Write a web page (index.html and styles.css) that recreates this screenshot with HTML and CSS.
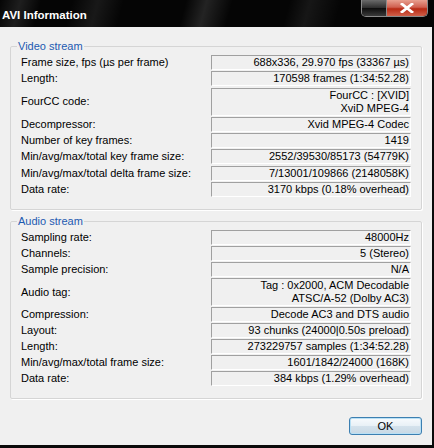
FILE: index.html
```html
<!DOCTYPE html>
<html>
<head>
<meta charset="utf-8">
<link rel="stylesheet" href="styles.css">
</head>
<body>
<div class="window">
  <div class="titlebar">
    <span class="title">AVI Information</span>
    <div class="caption-btns">
      <span class="btn-min"></span>
      <span class="btn-close">
        <svg width="14" height="10" viewBox="0 0 14 10"><path d="M2 1 L12 9 M12 1 L2 9" stroke="#fff" stroke-width="2.8" stroke-linecap="square" fill="none"/></svg>
      </span>
    </div>
  </div>
  <div class="client">
    <fieldset class="group video">
      <legend>Video stream</legend>
      <div class="rows">
        <div class="label">Frame size, fps (µs per frame)</div><div class="value">688x336, 29.970 fps (33367 µs)</div>
        <div class="label">Length:</div><div class="value">170598 frames (1:34:52.28)</div>
        <div class="label">FourCC code:</div><div class="value">FourCC : [XVID]<br>XviD MPEG-4</div>
        <div class="label">Decompressor:</div><div class="value">Xvid MPEG-4 Codec</div>
        <div class="label">Number of key frames:</div><div class="value">1419</div>
        <div class="label">Min/avg/max/total key frame size:</div><div class="value">2552/39530/85173 (54779K)</div>
        <div class="label">Min/avg/max/total delta frame size:</div><div class="value">7/13001/109866 (2148058K)</div>
        <div class="label">Data rate:</div><div class="value">3170 kbps (0.18% overhead)</div>
      </div>
    </fieldset>
    <fieldset class="group audio">
      <legend>Audio stream</legend>
      <div class="rows">
        <div class="label">Sampling rate:</div><div class="value">48000Hz</div>
        <div class="label">Channels:</div><div class="value">5 (Stereo)</div>
        <div class="label">Sample precision:</div><div class="value">N/A</div>
        <div class="label">Audio tag:</div><div class="value">Tag : 0x2000, ACM Decodable<br>ATSC/A-52 (Dolby AC3)</div>
        <div class="label">Compression:</div><div class="value">Decode AC3 and DTS audio</div>
        <div class="label">Layout:</div><div class="value">93 chunks (24000|0.50s preload)</div>
        <div class="label">Length:</div><div class="value">273229757 samples (1:34:52.28)</div>
        <div class="label">Min/avg/max/total frame size:</div><div class="value">1601/1842/24000 (168K)</div>
        <div class="label">Data rate:</div><div class="value">384 kbps (1.29% overhead)</div>
      </div>
    </fieldset>
    <div class="footer">
      <button class="ok">OK</button>
    </div>
  </div>
</div>
</body>
</html>
```

FILE: styles.css
```css
html, body {
  margin: 0;
  padding: 0;
  background: #000;
}
.window {
  width: 434px;
  height: 448px;
  display: flex;
  flex-direction: column;
  font-family: "Liberation Sans", Arial, sans-serif;
  font-size: 11px;
}
.titlebar {
  height: 27px;
  flex: none;
  display: flex;
  align-items: flex-start;
  background:
    linear-gradient(105deg, rgba(255,255,255,0) 0px, rgba(255,255,255,0.10) 20px, rgba(255,255,255,0) 40px, rgba(255,255,255,0) 70px, rgba(255,255,255,0.08) 95px, rgba(255,255,255,0) 120px, rgba(255,255,255,0) 180px, rgba(255,255,255,0.12) 200px, rgba(255,255,255,0) 225px, rgba(255,255,255,0) 280px, rgba(255,255,255,0.07) 300px, rgba(255,255,255,0) 330px),
    #050505;
}
.title {
  color: #fff;
  font-weight: bold;
  font-size: 11.5px;
  line-height: 13px;
  padding: 9px 0 0 2px;
}
.caption-btns {
  margin-left: auto;
  margin-right: 6px;
  display: flex;
  height: 17px;
  border: 1px solid #8a8a8a;
  border-top: none;
  border-radius: 0 0 5px 5px;
  overflow: hidden;
  box-sizing: border-box;
}
.btn-min {
  width: 24px;
  background: linear-gradient(#6a6a6a, #2c2c2c 50%, #0c0c0c 51%, #3a3a3a);
  border-right: 1px solid #8a8a8a;
}
.btn-close {
  width: 40px;
  display: flex;
  align-items: center;
  justify-content: center;
  background: linear-gradient(#e8a090, #d06050 45%, #b82a14 55%, #d0604a);
}
.client {
  flex: 1;
  background: #f0f0f0;
  border-right: 2px solid #0a0a0a;
  border-bottom: 3px solid #0a0a0a;
  padding: 13px 10px 0 10px;
  display: flex;
  flex-direction: column;
}
.group {
  margin: 0;
  padding: 2px 10px 12px 10px;
  border: 1px solid #d5d5d5;
  border-radius: 2px;
  box-shadow: 1px 1px 0 #fff;
}
.group + .group {
  margin-top: 5px;
}
.group legend {
  color: #1d5ab0;
  padding: 0 1px;
  margin-left: -4px;
  line-height: 13px;
}
.rows {
  display: grid;
  grid-template-columns: 1fr 200px;
  row-gap: 1px;
}
.video .rows {
  row-gap: 1.3px;
}
.label {
  align-self: center;
  line-height: 13px;
  color: #000;
}
.value {
  border-top: 1px solid #a0a0a0;
  border-left: 1px solid #a0a0a0;
  border-right: 1px solid #fff;
  border-bottom: 1px solid #fff;
  text-align: right;
  padding-right: 1px;
  line-height: 13px;
  color: #000;
}
.footer {
  display: flex;
  justify-content: flex-end;
  margin-top: 18px;
}
.ok {
  width: 73px;
  height: 18px;
  padding: 0;
  font-family: "Liberation Sans", Arial, sans-serif;
  font-size: 11px;
  color: #000;
  border: 1px solid #3c7fb1;
  border-radius: 3px;
  background: linear-gradient(#f8fbfd, #e8f0f6 50%, #d4e2ec 51%, #c8d8e4);
  box-shadow: inset 0 0 0 1px #b9e0f5;
}
```
